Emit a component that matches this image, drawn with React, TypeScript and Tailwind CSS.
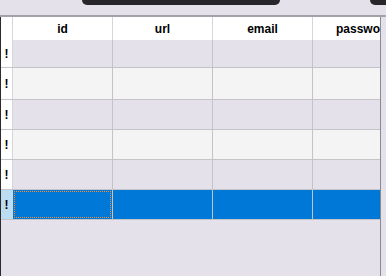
const columns = ["id", "url", "email", "password"]

const rows = [
  { bg: "bg-[#e4e1ea]", h: "h-[27px]" },
  { bg: "bg-[#f4f4f4]", h: "h-[31px]" },
  { bg: "bg-[#e4e1ea]", h: "h-[29px]" },
  { bg: "bg-[#f4f4f4]", h: "h-[29px]" },
  { bg: "bg-[#e4e1ea]", h: "h-[29px]" },
]

function RowHeader({ selected }: { selected?: boolean }) {
  return (
    <div
      className={`w-[12px] shrink-0 border-r border-[#d6d6da] flex items-center justify-center text-[12px] font-bold text-black ${
        selected ? "bg-[#bcdcf2]" : "bg-white"
      }`}
    >
      !
    </div>
  )
}

export default function App() {
  return (
    <div className="w-[386px] h-[276px] bg-[#e4e1ea] overflow-hidden flex flex-col font-['Liberation_Sans',Arial,sans-serif]">
      {/* title strip with the window notch */}
      <div className="h-[15px] shrink-0 flex items-start pl-[82px]">
        <div className="w-[198px] h-[5px] bg-[#27262b] rounded-b-[8px]" />
        <div className="ml-auto w-[16px] h-[5px] bg-[#27262b] rounded-bl-[8px]" />
      </div>
      <div className="h-[2px] shrink-0 bg-[#a2a2a8]" />

      <div className="flex flex-1 min-h-0">
        <div className="w-px shrink-0 bg-[#2a2a30]" />
        <div className="w-[380px] shrink-0 overflow-hidden border-r border-[#8a8a90] flex flex-col">
          {/* header */}
          <div className="flex h-[23px] shrink-0 bg-white">
            <div className="w-[12px] shrink-0 border-r border-[#d6d6da]" />
            {columns.map((c, i) => (
              <div
                key={c}
                className={`w-[100px] shrink-0 border-r border-[#d6d6da] flex items-center justify-center text-[12px] font-bold text-black ${
                  i === 3 ? "pl-[3px]" : ""
                }`}
              >
                {c}
              </div>
            ))}
          </div>

          {rows.map((r, i) => (
            <div key={i} className={`flex shrink-0 box-content ${r.h} border-b border-[#c4c4c8]`}>
              <RowHeader />
              {columns.map((c) => (
                <div key={c} className={`w-[100px] shrink-0 border-r border-[#c4c4c8] ${r.bg}`} />
              ))}
            </div>
          ))}

          {/* selected row */}
          <div className="flex shrink-0 box-content h-[29px] border-b border-[#c4c4c8]">
            <RowHeader selected />
            {columns.map((c, i) => (
              <div key={c} className="w-[100px] shrink-0 border-r border-[#c4c4c8] bg-[#0078d7] p-px">
                {i === 0 && <div className="h-full border border-dotted border-[#ff8c28]" />}
              </div>
            ))}
          </div>
        </div>
      </div>
    </div>
  )
}
